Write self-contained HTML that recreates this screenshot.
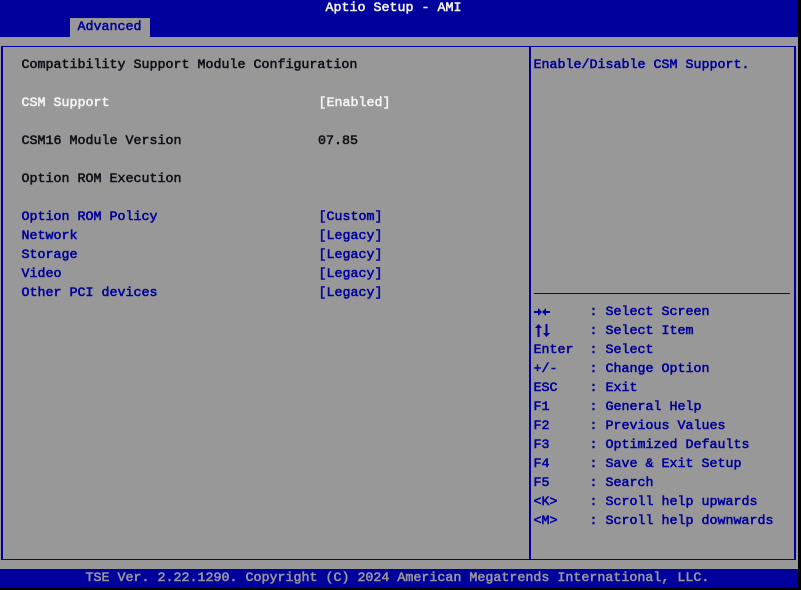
<!DOCTYPE html>
<html><head><meta charset="utf-8"><style>
html,body{margin:0;padding:0;background:#000;width:801px;height:590px;overflow:hidden}
#s{position:absolute;left:0;top:0;width:798px;height:588px;background:#989898;overflow:hidden}
.b{position:absolute;background:#00009c}
.t{position:absolute;font:normal 13.33px/19px "Liberation Mono",monospace;-webkit-text-stroke:.55px currentColor;white-space:pre;color:#00009c;height:19px}
.k{color:#101018}.w{color:#f4f4f4}.g{color:#989898}
</style></head><body><div id="s">
<div class="b" style="left:0;top:0;width:798px;height:37px"></div>
<div style="position:absolute;left:70px;top:18px;width:80px;height:19px;background:#989898"></div>
<div class="t w" style="left:325.5px;top:-1px">Aptio Setup - AMI</div>
<div class="t" style="left:77.5px;top:18px">Advanced</div>
<div class="b" style="left:1px;top:46px;width:795px;height:1px"></div>
<div class="b" style="left:1px;top:559px;width:795px;height:1px"></div>
<div class="b" style="left:1px;top:46px;width:2px;height:514px"></div>
<div class="b" style="left:794px;top:46px;width:2px;height:514px"></div>
<div class="b" style="left:529px;top:46px;width:2px;height:514px"></div>
<div class="b" style="left:534px;top:293px;width:256px;height:1px"></div>
<div class="t k" style="left:21.5px;top:56px">Compatibility Support Module Configuration</div>
<div class="t w" style="left:21.5px;top:94px">CSM Support</div><div class="t w" style="left:318.5px;top:94px">[Enabled]</div>
<div class="t k" style="left:21.5px;top:132px">CSM16 Module Version</div><div class="t k" style="left:318px;top:132px">07.85</div>
<div class="t k" style="left:21.5px;top:170px">Option ROM Execution</div>
<div class="t" style="left:21.5px;top:208px">Option ROM Policy</div><div class="t" style="left:318.5px;top:208px">[Custom]</div>
<div class="t" style="left:21.5px;top:227px">Network</div><div class="t" style="left:318.5px;top:227px">[Legacy]</div>
<div class="t" style="left:21.5px;top:246px">Storage</div><div class="t" style="left:318.5px;top:246px">[Legacy]</div>
<div class="t" style="left:21.5px;top:265px">Video</div><div class="t" style="left:318.5px;top:265px">[Legacy]</div>
<div class="t" style="left:21.5px;top:284px">Other PCI devices</div><div class="t" style="left:318.5px;top:284px">[Legacy]</div>
<div class="t" style="left:533.5px;top:56px">Enable/Disable CSM Support.</div>
<svg style="position:absolute;left:534px;top:305px" width="18" height="34" fill="#00009c"><path d="M0 6H4V3L8 7L4 11V8H0ZM16 6H12V3L8 7L12 11V8H16ZM1 23L4.500 19L8 23H5.500V32H3.500V23ZM9 28L12.500 32L16 28H13.500V19H11.500V28Z"/></svg>
<div class="t" style="left:533.500px;top:341px">Enter</div>
<div class="t" style="left:533.500px;top:360px">+/-</div>
<div class="t" style="left:533.500px;top:379px">ESC</div>
<div class="t" style="left:533.500px;top:398px">F1</div>
<div class="t" style="left:533.500px;top:417px">F2</div>
<div class="t" style="left:533.500px;top:436px">F3</div>
<div class="t" style="left:533.500px;top:455px">F4</div>
<div class="t" style="left:533.500px;top:474px">F5</div>
<div class="t" style="left:533.500px;top:493px">&lt;K&gt;</div>
<div class="t" style="left:533.500px;top:512px">&lt;M&gt;</div>
<div class="t" style="left:589.500px;top:303px">: Select Screen</div>
<div class="t" style="left:589.500px;top:322px">: Select Item</div>
<div class="t" style="left:589.500px;top:341px">: Select</div>
<div class="t" style="left:589.500px;top:360px">: Change Option</div>
<div class="t" style="left:589.500px;top:379px">: Exit</div>
<div class="t" style="left:589.500px;top:398px">: General Help</div>
<div class="t" style="left:589.500px;top:417px">: Previous Values</div>
<div class="t" style="left:589.500px;top:436px">: Optimized Defaults</div>
<div class="t" style="left:589.500px;top:455px">: Save &amp; Exit Setup</div>
<div class="t" style="left:589.500px;top:474px">: Search</div>
<div class="t" style="left:589.500px;top:493px">: Scroll help upwards</div>
<div class="t" style="left:589.500px;top:512px">: Scroll help downwards</div>
<div class="b" style="left:0;top:569px;width:798px;height:19px"></div>
<div class="t g" style="left:85.5px;top:569px">TSE Ver. 2.22.1290. Copyright (C) 2024 American Megatrends International, LLC.</div>
</div></body></html>
